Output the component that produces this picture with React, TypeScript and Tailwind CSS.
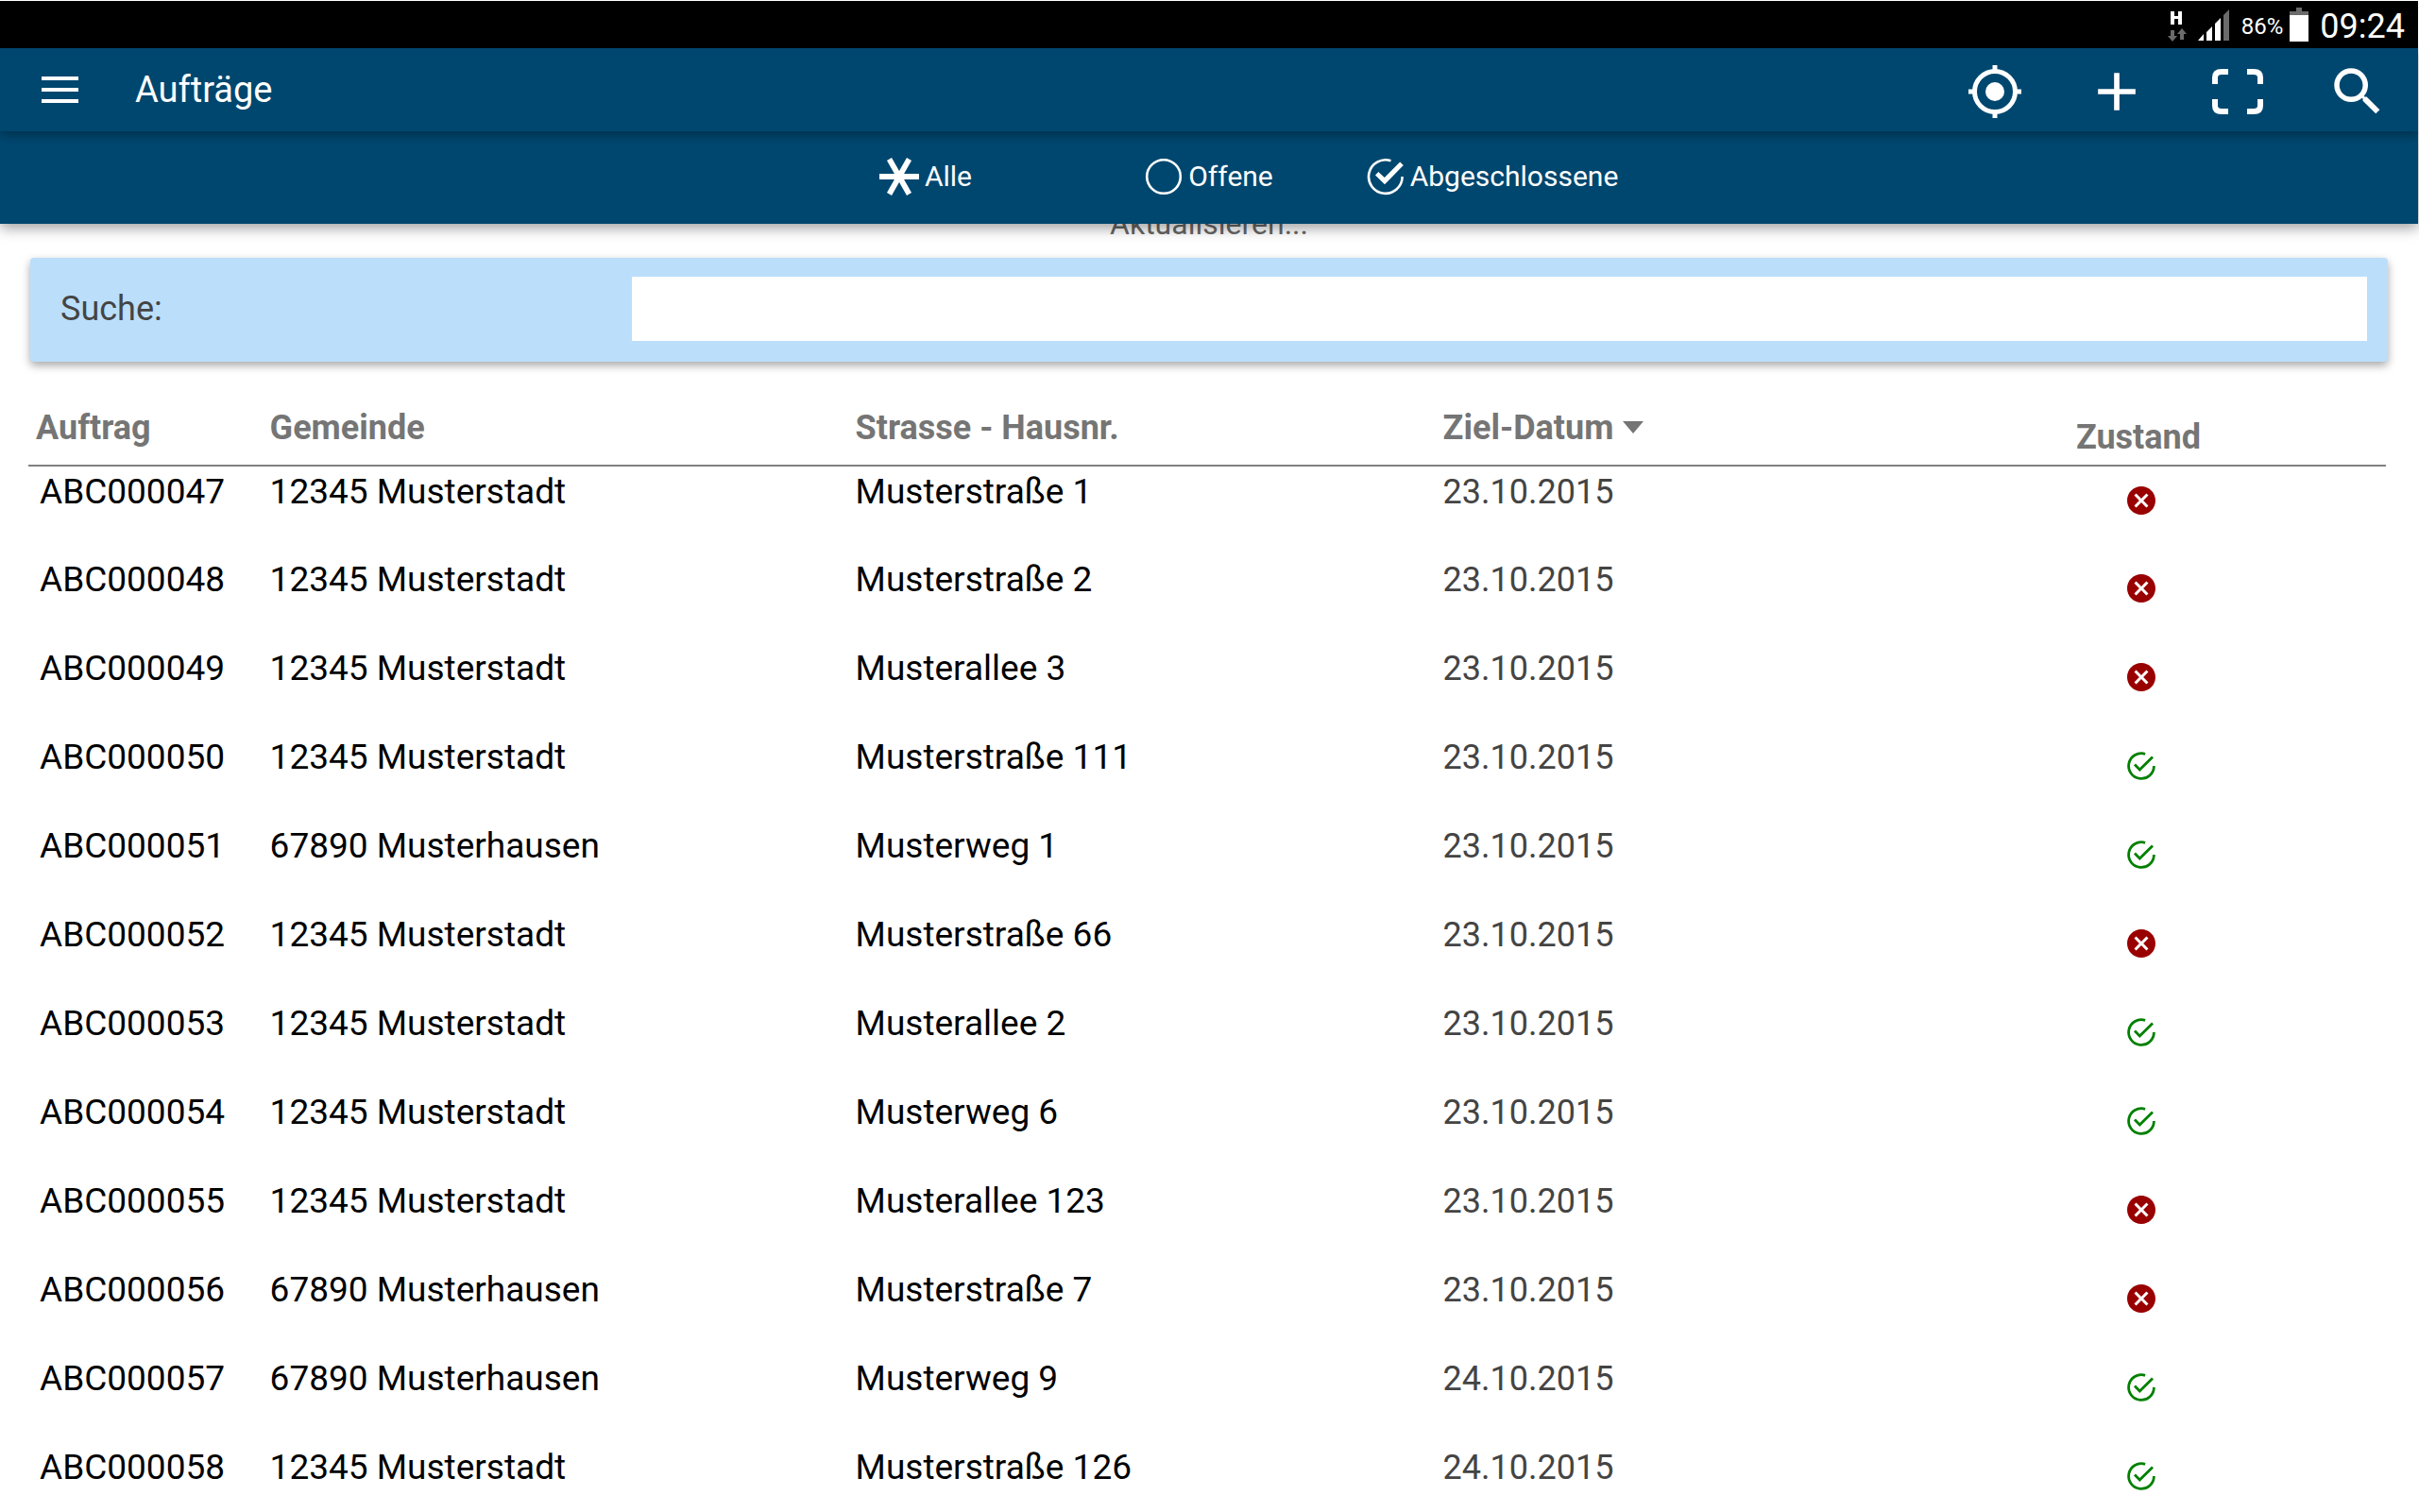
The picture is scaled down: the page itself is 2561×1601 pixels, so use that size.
import React from "react";
import { MdAdd, MdCancel, MdSearch } from "react-icons/md";

type Order = {
  id: string;
  town: string;
  street: string;
  date: string;
  done: boolean;
};

const orders: Order[] = [
  { id: "ABC000047", town: "12345 Musterstadt", street: "Musterstraße 1", date: "23.10.2015", done: false },
  { id: "ABC000048", town: "12345 Musterstadt", street: "Musterstraße 2", date: "23.10.2015", done: false },
  { id: "ABC000049", town: "12345 Musterstadt", street: "Musterallee 3", date: "23.10.2015", done: false },
  { id: "ABC000050", town: "12345 Musterstadt", street: "Musterstraße 111", date: "23.10.2015", done: true },
  { id: "ABC000051", town: "67890 Musterhausen", street: "Musterweg 1", date: "23.10.2015", done: true },
  { id: "ABC000052", town: "12345 Musterstadt", street: "Musterstraße 66", date: "23.10.2015", done: false },
  { id: "ABC000053", town: "12345 Musterstadt", street: "Musterallee 2", date: "23.10.2015", done: true },
  { id: "ABC000054", town: "12345 Musterstadt", street: "Musterweg 6", date: "23.10.2015", done: true },
  { id: "ABC000055", town: "12345 Musterstadt", street: "Musterallee 123", date: "23.10.2015", done: false },
  { id: "ABC000056", town: "67890 Musterhausen", street: "Musterstraße 7", date: "23.10.2015", done: false },
  { id: "ABC000057", town: "67890 Musterhausen", street: "Musterweg 9", date: "24.10.2015", done: true },
  { id: "ABC000058", town: "12345 Musterstadt", street: "Musterstraße 126", date: "24.10.2015", done: true },
];

function DoneIcon({ className }: { className?: string }) {
  return (
    <svg viewBox="-3 -3 36 36" className={className} fill="none" stroke="currentColor" aria-hidden="true">
      <path d="M19.1 2.3 A13.4 13.4 0 1 0 28.4 15" strokeWidth="2.8" />
      <path d="M8 13.6 L13.3 19 L27 5.4" strokeWidth="2.8" />
    </svg>
  );
}

function DoneTabIcon() {
  return (
    <svg viewBox="0 0 40 40" className="size-10" aria-hidden="true">
      <path d="M25.5 3.2 A17.8 17.8 0 1 0 37.6 20" fill="none" stroke="currentColor" strokeWidth="2.6" />
      <path d="M9 18.5 L12.3 15 L18.8 21 L35.2 4.5 L38.8 8 L19 28.3 Z" fill="currentColor" />
    </svg>
  );
}

function AllTabIcon() {
  return (
    <svg viewBox="0 0 42 40" className="h-10 w-[42px]" stroke="currentColor" strokeWidth="5.8" aria-hidden="true">
      <path d="M0 20H42M10.5 1.5L31.5 38.5M31.5 1.5L10.5 38.5" />
    </svg>
  );
}

function OpenTabIcon() {
  return (
    <svg viewBox="0 0 40 40" className="size-10" fill="none" stroke="currentColor" strokeWidth="2.6" aria-hidden="true">
      <circle cx="20" cy="20" r="17.8" />
    </svg>
  );
}

function MenuIcon() {
  return (
    <svg viewBox="0 0 39 28" className="h-7 w-[39px]" fill="currentColor" aria-hidden="true">
      <path d="M0 0H39V4H0ZM0 12H39V16H0ZM0 24H39V28H0Z" />
    </svg>
  );
}

function LocateIcon() {
  return (
    <svg viewBox="0 0 56 56" className="size-14" aria-hidden="true">
      <circle cx="28" cy="28" r="10" fill="currentColor" />
      <circle cx="28" cy="28" r="21.5" fill="none" stroke="currentColor" strokeWidth="5" />
      <path d="M28 0V6M28 50V56M0 28H6M50 28H56" stroke="currentColor" strokeWidth="5" />
    </svg>
  );
}

function ScanIcon() {
  return (
    <svg viewBox="0 0 54 48" className="h-12 w-[54px]" fill="none" stroke="currentColor" strokeWidth="6" aria-hidden="true">
      <path d="M17 3H10Q3 3 3 9V16M37 3H44Q51 3 51 9V16M17 45H10Q3 45 3 39V32M37 45H44Q51 45 51 39V32" />
    </svg>
  );
}

function StatusBar() {
  return (
    <div className="flex h-[50px] items-center justify-end bg-black pr-[14px] text-white">
      <svg viewBox="0 0 66 36" className="h-9 w-[66px]" aria-hidden="true">
        <path d="M3 4H7V9H11V4H15V18H11V12H7V18H3Z" fill="#fff" />
        <path d="M3 24H7V30H10L5 36L0 30H3ZM13 34V28H10L15 22L20 28H17V34Z" fill="#6b6b6b" />
        <path d="M32 35L38 28V35ZM41 35V26L47 20V35ZM50 35V17L56 11V35Z" fill="#fff" />
        <path d="M59 35V8L65 2V35Z" fill="#6b6b6b" />
      </svg>
      <span className="ml-3 pt-[3px] text-[24px] leading-9">86%</span>
      <svg viewBox="0 0 20 36" className="ml-[7px] h-9 w-5" aria-hidden="true">
        <path d="M7 0H13V4H20V8H0V4H7Z" fill="#6b6b6b" />
        <path d="M0 8H20V36H0Z" fill="#fff" />
      </svg>
      <span className="ml-3 pt-[3px] text-[36px] leading-9">09:24</span>
    </div>
  );
}

function AppBar() {
  return (
    <header className="relative z-20 flex h-[88px] items-center bg-[#00476f] pr-[31px] pl-11 text-white shadow-[0_4px_10px_rgba(0,0,0,0.32)]">
      <button type="button" aria-label="Menü">
        <MenuIcon />
      </button>
      <h1 className="ml-[60px] text-[38px] leading-10">Aufträge</h1>
      <div className="ml-auto flex items-center gap-[67px] pt-1">
        <button type="button" aria-label="Position">
          <LocateIcon />
        </button>
        <button type="button" aria-label="Hinzufügen">
          <MdAdd className="size-[68px]" />
        </button>
        <button type="button" aria-label="Scannen">
          <ScanIcon />
        </button>
        <button type="button" aria-label="Suchen">
          <MdSearch className="size-[66px]" />
        </button>
      </div>
    </header>
  );
}

function FilterTabs() {
  return (
    <nav className="relative z-10 flex h-[98px] items-center justify-center bg-[#00476f] pb-0.5 text-[30px] leading-9 text-white shadow-[0_4px_14px_rgba(0,0,0,0.4)]">
      <button type="button" className="flex w-[300px] items-center justify-center gap-1.5">
        <AllTabIcon />
        Alle
      </button>
      <button type="button" className="flex w-[300px] items-center justify-center gap-1.5">
        <OpenTabIcon />
        Offene
      </button>
      <button type="button" className="flex w-[300px] items-center justify-center gap-1.5">
        <DoneTabIcon />
        Abgeschlossene
      </button>
    </nav>
  );
}

export default function App() {
  return (
    <div className="h-screen overflow-hidden bg-white pt-px pr-px font-['Roboto',sans-serif] text-[36px] leading-[42px] text-black">
      <StatusBar />
      <AppBar />
      <FilterTabs />
      <main>
        <p className="-mt-[18px] text-center text-[32px] leading-9 text-[#666]">Aktualisieren...</p>
        <div className="mx-8 mt-[18px] flex h-[110px] items-center rounded bg-[#bbdefb] pr-[22px] pb-0.5 pl-8 text-[#444] shadow-[0_4px_10px_rgba(0,0,0,0.35)]">
          <label htmlFor="search" className="-mr-1.5 w-1/4">
            Suche:
          </label>
          <input id="search" type="text" className="h-[68px] flex-1 bg-white px-4 outline-none" />
        </div>
        <div className="mt-[30px] pr-[34px] pl-[30px]">
          <table className="w-full table-fixed text-left">
            <colgroup>
              <col className="w-[10%]" />
              <col className="w-[25%]" />
              <col className="w-[25%]" />
              <col className="w-[19%]" />
              <col className="w-[21%]" />
            </colgroup>
            <thead className="border-b-2 border-[#808080] text-[#757575]">
              <tr className="h-20">
                <th className="pl-2">Auftrag</th>
                <th className="pl-1.5">Gemeinde</th>
                <th className="pl-0.5">Strasse - Hausnr.</th>
                <th>
                  <button type="button" className="flex items-center gap-2.5">
                    Ziel-Datum
                    <svg viewBox="0 0 22 13" className="h-[13px] w-[22px]" fill="currentColor" aria-hidden="true">
                      <path d="M0 0H22L11 13Z" />
                    </svg>
                  </button>
                </th>
                <th className="pt-5 text-center">Zustand</th>
              </tr>
            </thead>
            <tbody>
              {orders.map((order) => (
                <tr key={order.id} className="h-[94px] align-top text-[37px]">
                  <td className="pt-1.5 pl-3">{order.id}</td>
                  <td className="pt-1.5 pl-1.5">{order.town}</td>
                  <td className="pt-1.5 pl-0.5">{order.street}</td>
                  <td className="pt-1.5 text-[36px] text-[#444]">{order.date}</td>
                  <td className="pt-[18px] pl-1.5">
                    {order.done ? (
                      <DoneIcon className="mx-auto size-9 text-[#008000]" />
                    ) : (
                      <MdCancel className="mx-auto size-9 text-[#990000]" />
                    )}
                  </td>
                </tr>
              ))}
            </tbody>
          </table>
        </div>
      </main>
    </div>
  );
}
